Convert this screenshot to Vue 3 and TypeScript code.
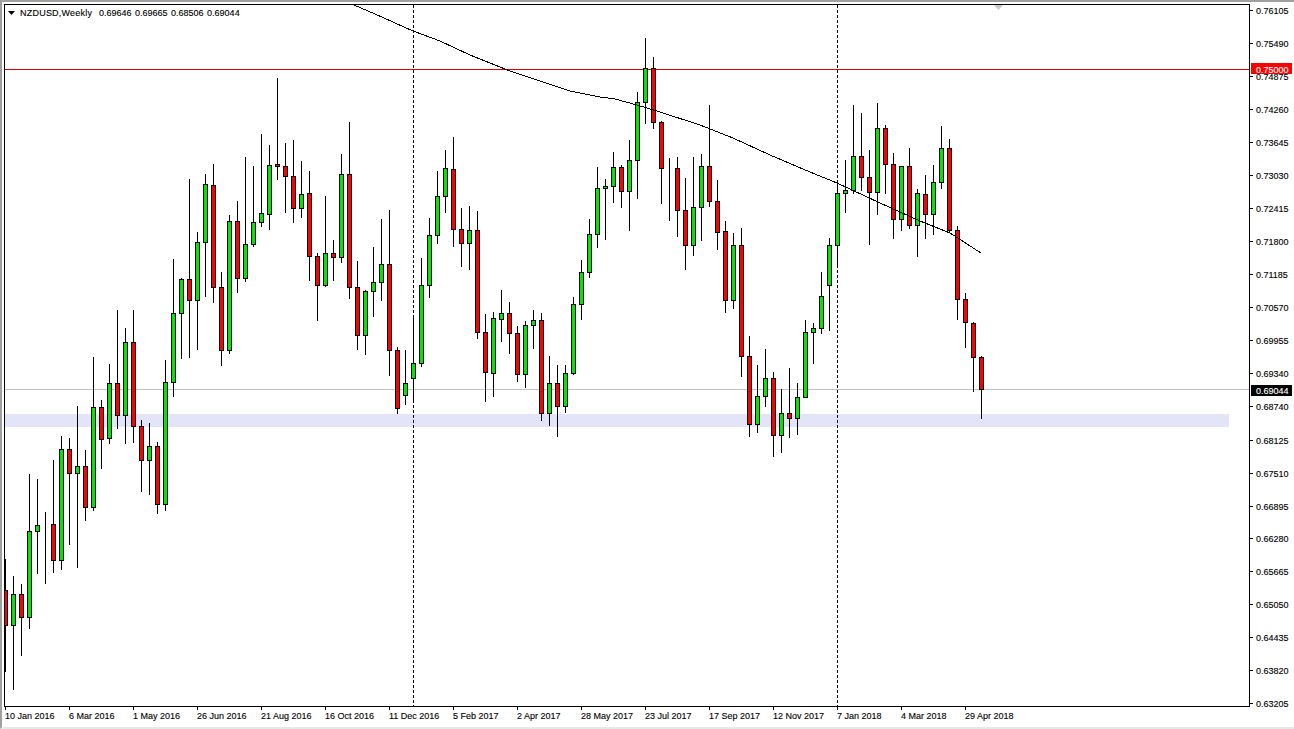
<script setup lang="ts">
type Candle = [number, number, number, number, 'g' | 'r']

const raw: Candle[] = [
  [559,672,590,625,'r'],[576,690,594,625,'g'],[584,656,594,617,'r'],[474,629,531,617,'g'],[479,574,525,531,'g'],
  [512,584,525,525,'r'],[460,573,524,560,'r'],[436,570,449,560,'g'],[438,545,449,473,'r'],[406,568,466,473,'g'],
  [450,521,466,507,'r'],[357,511,407,507,'g'],[400,469,407,439,'r'],[364,444,383,438,'g'],[310,429,383,415,'r'],
  [328,444,342,415,'g'],[310,443,342,426,'r'],[420,492,426,460,'r'],[423,495,446,460,'g'],[442,514,446,504,'r'],
  [360,511,382,504,'g'],[259,397,313,382,'g'],[278,359,279,313,'g'],[179,358,279,300,'r'],[232,350,242,300,'g'],
  [174,297,184,242,'g'],[164,303,185,287,'r'],[272,366,287,350,'r'],[215,354,221,350,'g'],[201,293,221,278,'r'],
  [157,282,244,278,'g'],[166,247,222,244,'g'],[134,227,213,222,'g'],[145,230,165,214,'g'],[78,180,164,166,'r'],
  [143,213,166,176,'r'],[140,223,176,208,'r'],[161,218,194,208,'g'],[171,281,193,256,'r'],[253,321,256,285,'r'],
  [196,287,253,285,'g'],[240,281,253,257,'r'],[154,263,174,257,'g'],[122,299,174,287,'r'],[261,350,287,335,'r'],
  [290,355,291,335,'g'],[247,317,282,291,'g'],[219,301,264,282,'g'],[210,376,264,350,'r'],[347,414,350,408,'r'],
  [350,405,383,395,'g'],[315,403,363,378,'g'],[258,367,285,363,'g'],[218,298,235,285,'g'],[171,244,196,235,'g'],
  [150,213,168,196,'g'],[137,247,169,229,'r'],[208,267,229,243,'r'],[206,270,230,243,'g'],[211,339,230,332,'r'],
  [314,402,332,372,'r'],[312,397,318,373,'g'],[290,342,313,319,'g'],[302,354,313,333,'r'],[326,382,333,374,'r'],
  [321,388,325,374,'g'],[310,349,320,325,'g'],[313,421,320,413,'r'],[356,426,383,413,'g'],[365,437,383,406,'r'],
  [365,413,373,406,'g'],[297,375,304,373,'g'],[260,320,272,304,'g'],[219,278,234,272,'g'],[167,248,188,234,'g'],
  [179,240,186,188,'g'],[152,203,167,186,'g'],[165,208,167,191,'r'],[140,231,160,191,'g'],[92,199,102,160,'g'],
  [38,124,68,102,'g'],[57,129,68,122,'r'],[121,204,122,168,'r'],[158,221,168,168,'r'],[157,237,168,210,'r'],
  [178,270,210,245,'r'],[157,256,207,245,'g'],[154,241,166,207,'g'],[105,207,166,201,'r'],[180,250,201,232,'r'],
  [221,313,231,300,'r'],[233,309,245,300,'g'],[228,377,245,356,'r'],[336,437,356,424,'r'],[365,433,396,424,'g'],
  [349,407,378,396,'g'],[372,457,378,435,'r'],[389,453,413,435,'g'],[368,438,413,418,'r'],[383,435,397,418,'g'],
  [320,397,332,397,'g'],[323,364,328,332,'g'],[272,334,296,328,'g'],[238,331,245,285,'g'],[184,265,193,245,'g'],
  [160,213,190,193,'g'],[105,194,156,190,'g'],[113,191,156,177,'r'],[150,245,177,192,'r'],[103,215,128,192,'g'],
  [125,194,128,164,'r'],[153,239,164,219,'r'],[166,231,166,219,'g'],[148,229,166,225,'r'],[189,257,193,225,'g'],
  [175,239,194,214,'r'],[165,235,182,214,'g'],[126,189,148,182,'g'],[139,233,148,230,'r'],[226,320,230,299,'r'],
  [293,348,299,322,'r'],[322,392,323,357,'r'],[356,419,357,389,'r'],
]

const candles = raw.map(([hi, lo, top, bottom, kind], i) => ({
  x: 5 + i * 8,
  hi,
  lo,
  top,
  bottom,
  fill: kind === 'g' ? '#00e800' : '#ff0000',
}))

const priceValues = [
  '0.76105','0.75490','0.74875','0.74260','0.73645','0.73030','0.72415','0.71800','0.71185','0.70570','0.69955',
  '0.69340','0.68740','0.68125','0.67510','0.66895','0.66280','0.65665','0.65050','0.64435','0.63820','0.63205',
]
const priceYs = [10,43,76,109,142,175,208,241,274,307,340,373,406,440,473,506,538,571,604,637,670,703]
const prices = priceValues.map((label, i) => ({ label, y: priceYs[i] }))

const dates = [
  '10 Jan 2016','6 Mar 2016','1 May 2016','26 Jun 2016','21 Aug 2016','16 Oct 2016','11 Dec 2016','5 Feb 2017',
  '2 Apr 2017','28 May 2017','23 Jul 2017','17 Sep 2017','12 Nov 2017','7 Jan 2018','4 Mar 2018','29 Apr 2018',
].map((label, i) => ({ label, x: 5 + i * 64 }))

const maPoints =
  '354,5 375,14 413,31 440,41 470,55 510,71 540,81 570,91 600,97 615,99 637,105 660,112 700,125 733,138 770,155 810,172 837,183 880,203 920,221 950,233 981,253'
</script>

<template>
  <div class="terminal">
    <svg class="chart" width="1294" height="729" viewBox="0 0 1294 729" xmlns="http://www.w3.org/2000/svg">
      <defs>
        <clipPath id="plot"><rect x="5" y="5" width="1244" height="701" /></clipPath>
      </defs>

      <g clip-path="url(#plot)">
        <rect x="5" y="414" width="1224" height="13" fill="#e3e4f8" />
        <g class="crisp">
          <line x1="5" x2="1249" y1="389.5" y2="389.5" stroke="#c0c0c0" />
          <line x1="5" x2="1249" y1="69.5" y2="69.5" stroke="#d80000" />
          <line x1="413.5" x2="413.5" y1="5" y2="706" class="dash" />
          <line x1="837.5" x2="837.5" y1="5" y2="706" class="dash" />
          <g v-for="c in candles" :key="c.x">
            <line :x1="c.x + 0.5" :x2="c.x + 0.5" :y1="c.hi" :y2="c.lo" stroke="#000" />
            <rect :x="c.x - 1.5" :y="c.top + 0.5" width="4" :height="c.bottom - c.top" :fill="c.fill" stroke="#000" />
          </g>
          <polyline :points="maPoints" fill="none" stroke="#000" stroke-width="1" />
        </g>
        <polygon points="994,5 1003,5 998.5,10" fill="#c8c8c8" />
      </g>

      <g class="crisp">
        <line x1="4.5" x2="4.5" y1="4" y2="707" stroke="#000" />
        <line x1="4" x2="1250" y1="4.5" y2="4.5" stroke="#000" />
        <line x1="1249.5" x2="1249.5" y1="4" y2="707" stroke="#000" />
        <line x1="4" x2="1250" y1="706.5" y2="706.5" stroke="#000" />
        <line v-for="p in prices" :key="p.label" x1="1250" x2="1253" :y1="p.y + 0.5" :y2="p.y + 0.5" stroke="#000" />
        <line v-for="d in dates" :key="d.label" :x1="d.x + 0.5" :x2="d.x + 0.5" y1="707" y2="710" stroke="#000" />
      </g>

      <polygon points="8,11 15,11 11.5,15" fill="#000" />
      <text x="20" y="16" class="label title">NZDUSD,Weekly</text>
      <text x="99" y="16" class="label quote">0.69646 0.69665 0.68506 0.69044</text>

      <text v-for="p in prices" :key="p.label" x="1256" :y="p.y + 4" class="label">{{ p.label }}</text>
      <text v-for="d in dates" :key="d.label" :x="d.x" y="719" class="label">{{ d.label }}</text>

      <rect x="1251" y="63" width="41" height="11" fill="#ff0000" />
      <text x="1256" y="73" class="label tag">0.75000</text>
      <rect x="1251" y="385" width="41" height="11" fill="#000" />
      <text x="1256" y="394" class="label tag">0.69044</text>
    </svg>
  </div>
</template>

<style scoped>
.terminal {
  width: 1294px;
  height: 729px;
  position: relative;
  overflow: hidden;
  background: #fff;
  box-sizing: border-box;
}
.terminal::before {
  content: "";
  position: absolute;
  inset: 0;
  border-top: 2px solid #a0a0a0;
  border-left: 2px solid #a0a0a0;
  border-bottom: 2px solid #e8e8e8;
  pointer-events: none;
}
.chart {
  display: block;
  position: relative;
}
.crisp {
  shape-rendering: crispEdges;
}
.dash {
  stroke: #000;
  stroke-dasharray: 3 2;
}
.label {
  font-family: "Liberation Sans", Arial, sans-serif;
  font-size: 9px;
  fill: #000;
  stroke: #000;
  stroke-width: 0.12px;
}
.title {
  letter-spacing: 0.22px;
}
.quote {
  word-spacing: 1px;
}
.tag {
  fill: #fff;
  stroke: #fff;
}
</style>

<style>
html,
body {
  margin: 0;
  background: #fff;
  overflow: hidden;
}
</style>
